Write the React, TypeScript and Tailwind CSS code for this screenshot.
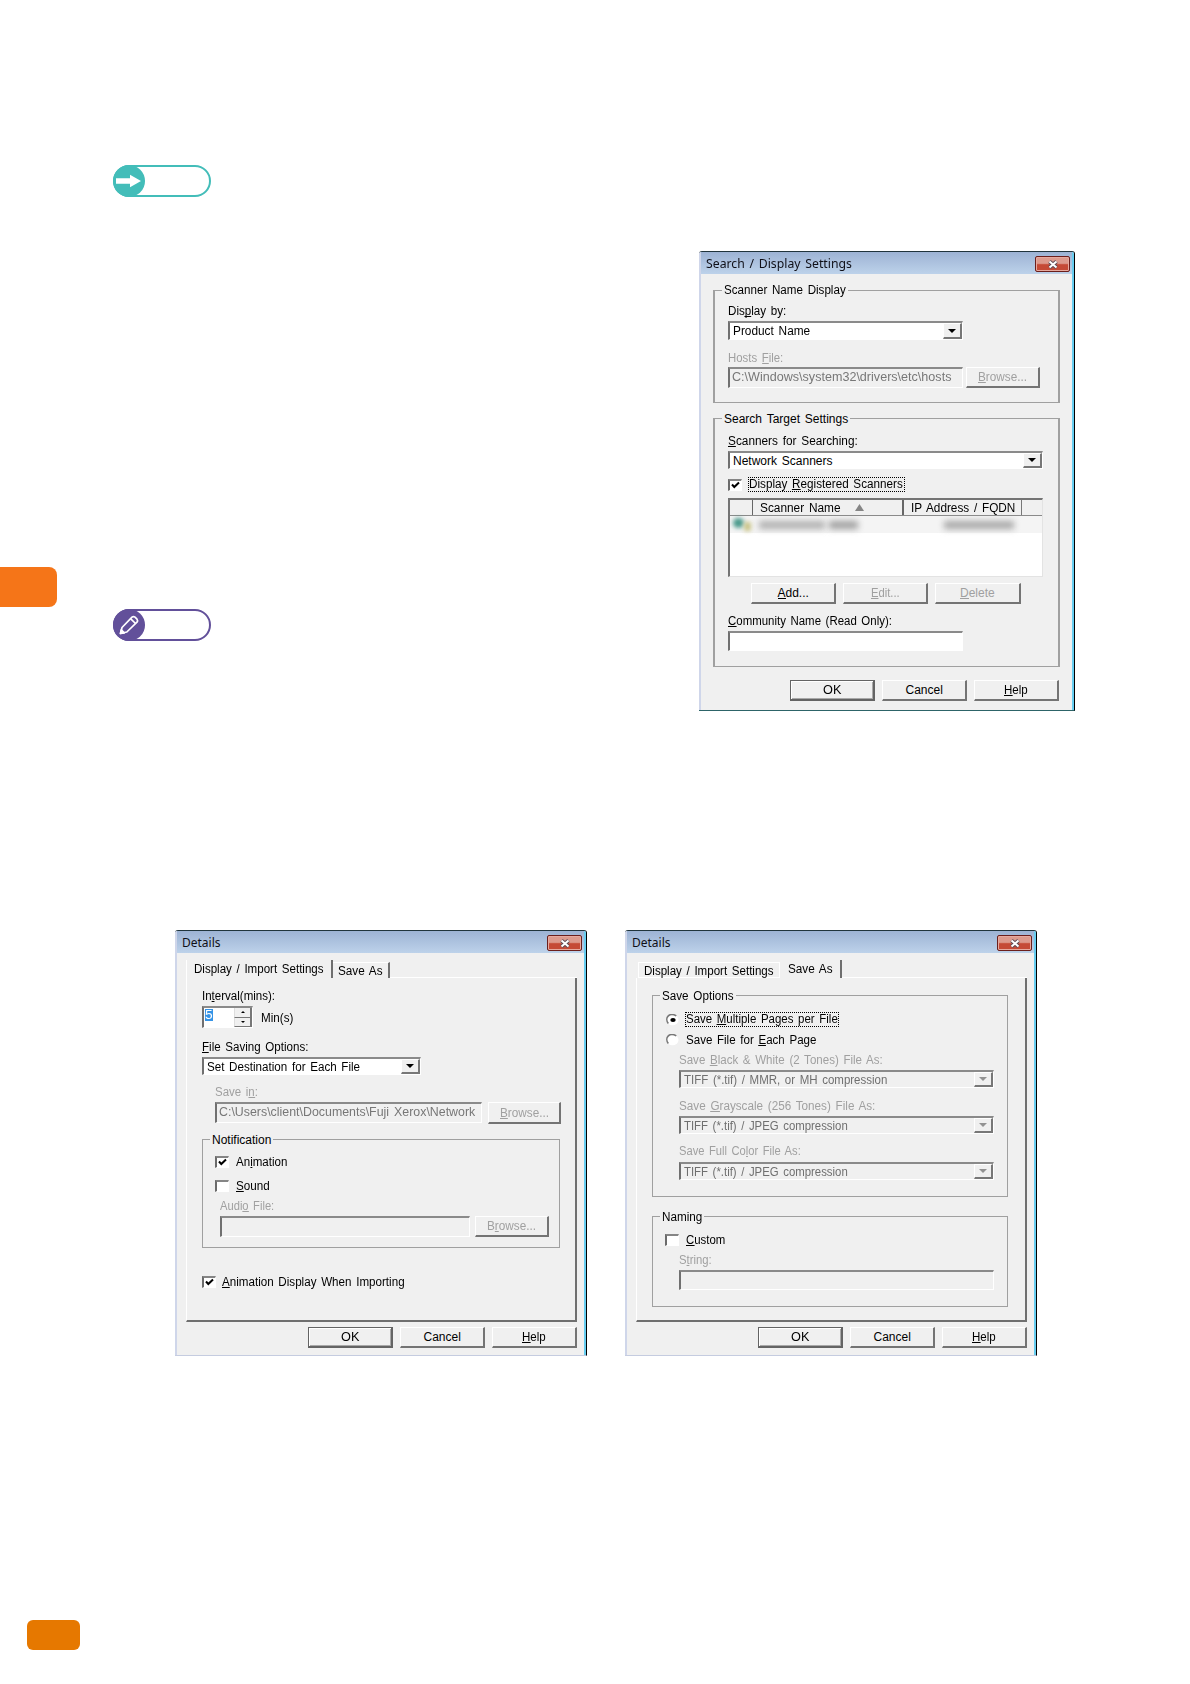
import React, { useLayoutEffect, useRef } from "react";

type Kids = { children?: React.ReactNode };

/* One line of dialog text, stretched to the width its class gives. "_" marks the access key. */
function T({ text, className = "" }: { text: string; className?: string }) {
  const box = useRef<HTMLSpanElement>(null);
  const ink = useRef<HTMLSpanElement>(null);
  useLayoutEffect(() => {
    if (box.current && ink.current) {
      ink.current.style.transform = `scaleX(${box.current.clientWidth / ink.current.offsetWidth})`;
    }
  }, []);
  const i = text.indexOf("_");
  return (
    <span ref={box} className={`block h-[14px] shrink-0 leading-[14px] ${className}`}>
      <span ref={ink} className="inline-block origin-left whitespace-nowrap align-top [word-spacing:1.5px]">
        {i < 0 ? (
          text
        ) : (
          <>
            {text.slice(0, i)}
            <span className="border-b border-current inline-block h-[13px] leading-[14px]">{text[i + 1]}</span>
            {text.slice(i + 2)}
          </>
        )}
      </span>
    </span>
  );
}

const dim = "text-[#a0a0a0]";

function Button({ text, tw, className = "", strong, disabled }: { text: string; tw: string; className?: string; strong?: boolean; disabled?: boolean }) {
  return (
    <div
      className={`flex shrink-0 items-center justify-center border-t border-l border-r-2 border-b-2 bg-[#f0f0f0] ${
        strong ? "border-[#646464] shadow-[inset_1px_1px_0_#fff,inset_-1px_-1px_0_#a8a8a8]" : "border-t-white border-l-white border-r-[#747474] border-b-[#747474]"
      } ${disabled ? dim : "text-black"} ${className}`}
    >
      <T text={text} className={tw} />
    </div>
  );
}

function Field({ className = "", children }: Kids & { className?: string }) {
  return (
    <div className={`flex shrink-0 items-center overflow-hidden border-t-2 border-l-2 border-r border-b border-t-[#8a8a8a] border-l-[#707070] border-r-white border-b-white ${className}`}>
      {children}
    </div>
  );
}

function Combo({ text, tw, className = "", disabled }: { text: string; tw: string; className?: string; disabled?: boolean }) {
  return (
    <Field className={`h-[18px] ${disabled ? "bg-[#f0f0f0] text-[#6f6f6f]" : "bg-white text-black"} ${className}`}>
      <T text={text} className={`ml-[3px] ${tw}`} />
      <div className="ml-auto flex h-full w-[19px] items-center justify-center border-t border-l border-r-2 border-b-2 border-t-white border-l-white border-r-[#777] border-b-[#777] bg-[#f0f0f0]">
        <svg className="h-[4px] w-[8px]" viewBox="0 0 8 4">
          <path d="M0 0h8L4 4z" fill={disabled ? "#929292" : "#000"} />
        </svg>
      </div>
    </Field>
  );
}

function Check({ on }: { on?: boolean }) {
  return (
    <div className="h-[12px] w-[14px] shrink-0 border-t-2 border-l-2 border-r border-b border-t-[#858585] border-l-[#6b6b6b] border-r-white border-b-white bg-white">
      {on && (
        <svg className="h-[9px] w-[11px]" viewBox="0 0 11 9">
          <path d="M2 3.5L4.3 6L9 1.5" fill="none" stroke="#000" strokeWidth="2" />
        </svg>
      )}
    </div>
  );
}

function Radio({ on }: { on?: boolean }) {
  return (
    <svg className="h-[12px] w-[14px] shrink-0" viewBox="0 0 14 12">
      <ellipse cx="7.5" cy="6" rx="6" ry="5.2" fill="#fff" />
      <path d="M11.3 1.9C8.5 .2 5 .3 3.1 2.1C1.4 3.8 1.4 7 3.3 9.5" fill="none" stroke="#777" strokeWidth="1.6" />
      {on && <ellipse cx="8" cy="6" rx="2.7" ry="2" fill="#000" />}
    </svg>
  );
}

function Group({ title, tw, className = "", legend = "-mt-[7px]", children }: Kids & { title: string; tw: string; className?: string; legend?: string }) {
  return (
    <div className={`flex shrink-0 flex-col border-[#a0a0a0] ${className}`}>
      <div className={`ml-[7px] self-start bg-[#f0f0f0] px-[2px] ${legend}`}>
        <T text={title} className={tw} />
      </div>
      {children}
    </div>
  );
}

function Dialog({ title, tw, className = "", children }: Kids & { title: string; tw: string; className?: string }) {
  return (
    <div className={`flex shrink-0 flex-col rounded-t-[3px] border-t border-r border-b border-t-[#20343c] border-r-black bg-[#f0f0f0] ${className}`}>
      <div className="flex min-h-0 flex-1 flex-col overflow-hidden rounded-t-[2px] border-r-2 border-l-2 border-r-[#67cdf0] border-l-[#cfd6ea]">
        <div className="flex h-[22px] shrink-0 items-start bg-linear-to-b from-[#9db3d4] to-[#bdd2ea] pt-[4px] pr-[2px] pl-[5px]">
          <T text={title} className={`mt-[1px] font-['Noto_Sans'] text-[12px] text-[#101018] ${tw}`} />
          <div className="ml-auto flex h-[16px] w-[35px] items-center justify-center rounded-[2px] border border-[#6b1f1c] bg-linear-to-b from-[#dd9a8d] from-45% to-[#c54a36] to-55% shadow-[inset_0_0_0_1px_#e7a99e]">
            <svg className="h-[9px] w-[12px]" viewBox="0 0 12 9">
              <path d="M2.5 1.5L9.5 7.5M9.5 1.5L2.5 7.5" stroke="#5c4a55" strokeWidth="3.8" />
              <path d="M2.5 1.5L9.5 7.5M9.5 1.5L2.5 7.5" stroke="#fff" strokeWidth="2" />
            </svg>
          </div>
        </div>
        {children}
      </div>
    </div>
  );
}

function Footer({ className = "" }: { className?: string }) {
  return (
    <div className={`flex shrink-0 gap-[7px] ${className}`}>
      <Button text="OK" tw="w-[18px]" className="h-[21px] w-[85px] border-2" strong />
      <Button text="Cancel" tw="w-[37px]" className="h-[21px] w-[85px]" />
      <Button text="_Help" tw="w-[24px]" className="h-[21px] w-[85px]" />
    </div>
  );
}

function SearchDialog() {
  return (
    <Dialog title="Search / Display Settings" tw="w-[146px]" className="h-[460px] w-[376px] border-b-[#2d6468]">
      <div className="flex flex-col pl-[12px]">
        <Group title="Scanner Name Display" tw="w-[122px]" legend="-mt-[8px]" className="mt-[16px] h-[113px] w-[347px] border-x-2 border-y">
          <div className="flex flex-col pl-[13px]">
            <T text="Dis_play by:" className="mt-[7px] w-[58px]" />
            <Combo text="Product Name" tw="w-[77px]" className="mt-[3px] h-[19px] w-[235px]" />
            <T text="Hosts _File:" className={`mt-[11px] w-[55px] ${dim}`} />
            <div className="mt-[2px] flex gap-[3px]">
              <Field className="h-[21px] w-[235px] text-[#777]">
                <T text="C:\Windows\system32\drivers\etc\hosts" className="-mt-[3px] ml-[2px] w-[219px]" />
              </Field>
              <Button text="_Browse..." tw="w-[49px]" className="h-[21px] w-[74px]" disabled />
            </div>
          </div>
        </Group>
        <Group title="Search Target Settings" tw="w-[124px]" className="mt-[15px] h-[249px] w-[347px] border-x-2 border-y">
          <div className="flex flex-col pl-[13px]">
            <T text="_Scanners for Searching:" className="mt-[8px] w-[130px]" />
            <Combo text="Network Scanners" tw="w-[100px]" className="mt-[3px] w-[315px]" />
            <div className="mt-[8px] flex h-[15px] items-center gap-[6px]">
              <Check on />
              <div className="h-[15px] w-[157px] border border-dotted border-black">
                <T text="Display _Registered Scanners" className="-mt-px w-[154px]" />
              </div>
            </div>
            <div className="mt-[6px] h-[79px] w-[315px] border-t-2 border-l-2 border-r border-b border-[#747474] border-r-[#e3e3e3] border-b-[#e3e3e3] bg-white">
              <div className="flex h-[16px] border-b border-[#8a8a8a] bg-[#f0f0f0]">
                <div className="w-[23px] border-r border-[#666]" />
                <div className="flex w-[151px] items-center border-r-2 border-[#666] pl-[7px]">
                  <T text="Scanner Name" className="w-[81px]" />
                  <svg className="ml-[14px] h-[7px] w-[9px]" viewBox="0 0 9 7">
                    <path d="M4.5 0L9 7H0z" fill="#858585" />
                  </svg>
                </div>
                <div className="flex w-[118px] items-center border-r border-[#777] pl-[7px]">
                  <T text="IP Address / FQDN" className="w-[104px]" />
                </div>
              </div>
              <div className="flex h-[17px] items-center bg-[#f4f4f4]">
                <div className="ml-[3px] h-[10px] w-[11px] -translate-y-[2px] rounded-full bg-[#4a9a8c] blur-[2px]" />
                <div className="h-[9px] w-[7px] translate-y-[2px] bg-[#c9c489] blur-[2px]" />
                <div className="ml-[8px] h-[8px] w-[66px] bg-[#b0b0b0] blur-[3px]" />
                <div className="ml-[4px] h-[8px] w-[29px] bg-[#a0a0a0] blur-[3px]" />
                <div className="ml-[86px] h-[8px] w-[70px] bg-[#a8a8a8] blur-[3px]" />
              </div>
            </div>
            <div className="mt-[6px] ml-[23px] flex gap-[7px]">
              <Button text="_Add..." tw="w-[31px]" className="h-[21px] w-[85px]" />
              <Button text="_Edit..." tw="w-[29px]" className="h-[21px] w-[85px]" disabled />
              <Button text="_Delete" tw="w-[35px]" className="h-[21px] w-[86px]" disabled />
            </div>
            <T text="_Community Name (Read Only):" className="mt-[10px] w-[164px]" />
            <Field className="mt-[3px] h-[20px] w-[235px] bg-white" />
          </div>
        </Group>
        <Footer className="mt-[13px] ml-[77px]" />
      </div>
    </Dialog>
  );
}

function TabPanel({ children }: Kids) {
  return <div className="ml-[9px] flex h-[344px] w-[391px] shrink-0 flex-col border-r-2 border-b-2 border-l border-r-[#6f6f6f] border-b-[#6f6f6f] border-l-white pl-[15px]">{children}</div>;
}

function ImportDialog() {
  return (
    <Dialog title="Details" tw="w-[39px]" className="h-[426px] w-[412px] border-b-[#c5cce0]">
      <div className="mt-[7px] ml-[9px] flex h-[18px] w-[391px] shrink-0">
        <div className="w-[147px] border-r-2 border-l border-r-[#6f6f6f] border-l-white pt-[2px] pl-[7px]">
          <T text="Display / Import Settings" className="w-[130px]" />
        </div>
        <div className="mt-[2px] h-[16px] w-[57px] border-t border-r-2 border-t-white border-r-[#6f6f6f] pt-px pl-[5px]">
          <T text="Save As" className="w-[45px]" />
        </div>
        <div className="flex-1 border-b border-white" />
      </div>
      <TabPanel>
        <T text="In_terval(mins):" className="mt-[11px] w-[73px]" />
        <div className="mt-[3px] flex h-[22px]">
          <Field className="h-[22px] w-[51px] bg-white">
            <div className="-mt-[6px] ml-px h-[12px] w-[8px] bg-[#3593e6] text-white">
              <T text="5" className="-mt-px w-[8px]" />
            </div>
            <div className="ml-auto flex h-full w-[18px] flex-col">
              {["M0 2h4L2 0z", "M0 0h4L2 2z"].map((d) => (
                <div key={d} className="flex flex-1 items-center justify-center border-r-2 border-b border-l border-r-[#777] border-b-[#777] border-l-[#ddd] bg-[#f0f0f0]">
                  <svg className="h-[2px] w-[4px]" viewBox="0 0 4 2">
                    <path d={d} fill="#000" />
                  </svg>
                </div>
              ))}
            </div>
          </Field>
          <T text="Min(s)" className="mt-[5px] ml-[8px] w-[32px]" />
        </div>
        <T text="_File Saving Options:" className="mt-[12px] w-[106px]" />
        <Combo text="Set Destination for Each File" tw="w-[153px]" className="mt-[3px] w-[219px]" />
        <T text="Save i_n:" className={`mt-[10px] ml-[13px] w-[43px] ${dim}`} />
        <div className="mt-[3px] ml-[13px] flex h-[22px] gap-[6px]">
          <Field className="h-[21px] w-[267px] text-[#777]">
            <T text="C:\Users\client\Documents\Fuji Xerox\Network" className="-mt-[2px] ml-[2px] w-[256px]" />
          </Field>
          <Button text="_Browse..." tw="w-[49px]" className="h-[22px] w-[73px]" disabled />
        </div>
        <Group title="Notification" tw="w-[59px]" className="mt-[15px] h-[109px] w-[358px] border">
          <div className="mt-[8px] ml-[12px] flex h-[14px] items-center gap-[7px]">
            <Check on />
            <T text="An_imation" className="w-[51px]" />
          </div>
          <div className="mt-[10px] ml-[12px] flex h-[14px] items-center gap-[7px]">
            <Check />
            <T text="_Sound" className="w-[34px]" />
          </div>
          <T text="Audi_o File:" className={`mt-[6px] ml-[17px] w-[54px] ${dim}`} />
          <div className="mt-[3px] ml-[17px] flex h-[21px] gap-[5px]">
            <Field className="h-[21px] w-[250px]" />
            <Button text="B_rowse..." tw="w-[49px]" className="h-[21px] w-[74px]" disabled />
          </div>
        </Group>
        <div className="mt-[27px] flex h-[14px] items-center gap-[6px]">
          <Check on />
          <T text="_Animation Display When Importing" className="w-[183px]" />
        </div>
      </TabPanel>
      <Footer className="mt-[5px] ml-[131px]" />
    </Dialog>
  );
}

const formats = [
  { label: "Save _Black & White (2 Tones) File As:", lw: "mt-[6px] w-[204px]", value: "TIFF (*.tif) / MMR, or MH compression", vw: "w-[203px]", gap: "mt-[3px]" },
  { label: "Save _Grayscale (256 Tones) File As:", lw: "mt-[11px] w-[196px]", value: "TIFF (*.tif) / JPEG compression", vw: "w-[164px]", gap: "mt-[3px]" },
  { label: "Save Full Co_lor File As:", lw: "mt-[10px] w-[122px]", value: "TIFF (*.tif) / JPEG compression", vw: "w-[164px]", gap: "mt-[4px]" },
];

function SaveAsDialog() {
  return (
    <Dialog title="Details" tw="w-[39px]" className="h-[426px] w-[412px] border-b-[#c5cce0]">
      <div className="mt-[7px] ml-[9px] flex h-[18px] w-[391px] shrink-0">
        <div className="mt-[2px] ml-[2px] h-[16px] w-[142px] border border-white pt-px pl-[5px]">
          <T text="Display / Import Settings" className="w-[130px]" />
        </div>
        <div className="w-[62px] border-r-2 border-[#6f6f6f] pt-[2px] pl-[8px]">
          <T text="Save As" className="w-[45px]" />
        </div>
        <div className="flex-1 border-b border-white" />
      </div>
      <TabPanel>
        <Group title="Save Options" tw="w-[72px]" className="mt-[17px] h-[202px] w-[356px] border">
          <div className="mt-[9px] ml-[12px] flex h-[15px] items-center gap-[6px]">
            <Radio on />
            <div className="h-[15px] w-[154px] border border-dotted border-black">
              <T text="Save _Multiple Pages per File" className="-mt-px w-[152px]" />
            </div>
          </div>
          <div className="mt-[6px] ml-[12px] flex h-[14px] items-center gap-[7px]">
            <Radio />
            <T text="Save File for _Each Page" className="w-[130px]" />
          </div>
          <div className="flex flex-col pl-[26px]">
            {formats.map((f) => (
              <React.Fragment key={f.label}>
                <T text={f.label} className={`${dim} ${f.lw}`} />
                <Combo text={f.value} tw={f.vw} className={`w-[315px] ${f.gap}`} disabled />
              </React.Fragment>
            ))}
          </div>
        </Group>
        <Group title="Naming" tw="w-[40px]" className="mt-[19px] h-[91px] w-[356px] border">
          <div className="mt-[9px] ml-[12px] flex h-[14px] items-center gap-[7px]">
            <Check />
            <T text="_Custom" className="w-[39px]" />
          </div>
          <T text="S_tring:" className={`mt-[6px] ml-[26px] w-[33px] ${dim}`} />
          <Field className="mt-[3px] ml-[26px] h-[20px] w-[315px]" />
        </Group>
      </TabPanel>
      <Footer className="mt-[5px] ml-[131px]" />
    </Dialog>
  );
}

export default function App() {
  return (
    <div className="flex h-[1684px] w-[1190px] flex-col overflow-hidden bg-white font-['Liberation_Sans',sans-serif] text-[12px] text-black">
      <div className="mt-[165px] ml-[113px] h-[32px] w-[98px] shrink-0 rounded-full border-2 border-[#43bdb9]">
        <div className="-mt-[2px] -ml-[2px] flex h-[32px] w-[32px] items-center justify-center rounded-full bg-[#43bdb9]">
          <svg className="h-[14px] w-[26px]" viewBox="0 0 26 14">
            <path d="M0 4.2H14V.8L25 7L14 13.200V9.800H0z" fill="#fff" />
          </svg>
        </div>
      </div>
      <div className="mt-[54px] flex h-[460px] shrink-0">
        <div className="flex w-[699px] flex-col">
          <div className="mt-[316px] h-[40px] w-[57px] rounded-r-[8px] bg-[#f57518]" />
          <div className="mt-[2px] ml-[113px] h-[32px] w-[98px] rounded-full border-2 border-[#62509a]">
            <div className="-mt-[2px] -ml-[2px] flex h-[32px] w-[32px] items-center justify-center rounded-full bg-[#62509a]">
              <svg className="h-[22px] w-[22px]" viewBox="0 0 22 22" fill="none" stroke="#fff" strokeWidth="1.7" strokeLinejoin="round">
                <path d="M2.5 19.5L4 13.5L14 3.200Q15.500 2 17 3.200L19 5.200Q20.200 6.800 19 8.200L8.800 18Z" />
                <path d="M12.800 4.800L17.500 9.500" />
                <path d="M2.500 19.500L3.300 15.800L6.300 18.800Z" fill="#fff" />
              </svg>
            </div>
          </div>
        </div>
        <SearchDialog />
      </div>
      <div className="mt-[219px] ml-[175px] flex shrink-0 gap-[38px]">
        <ImportDialog />
        <SaveAsDialog />
      </div>
      <div className="mt-[264px] ml-[27px] h-[30px] w-[53px] shrink-0 rounded-[6px] bg-[#e67800]" />
    </div>
  );
}
